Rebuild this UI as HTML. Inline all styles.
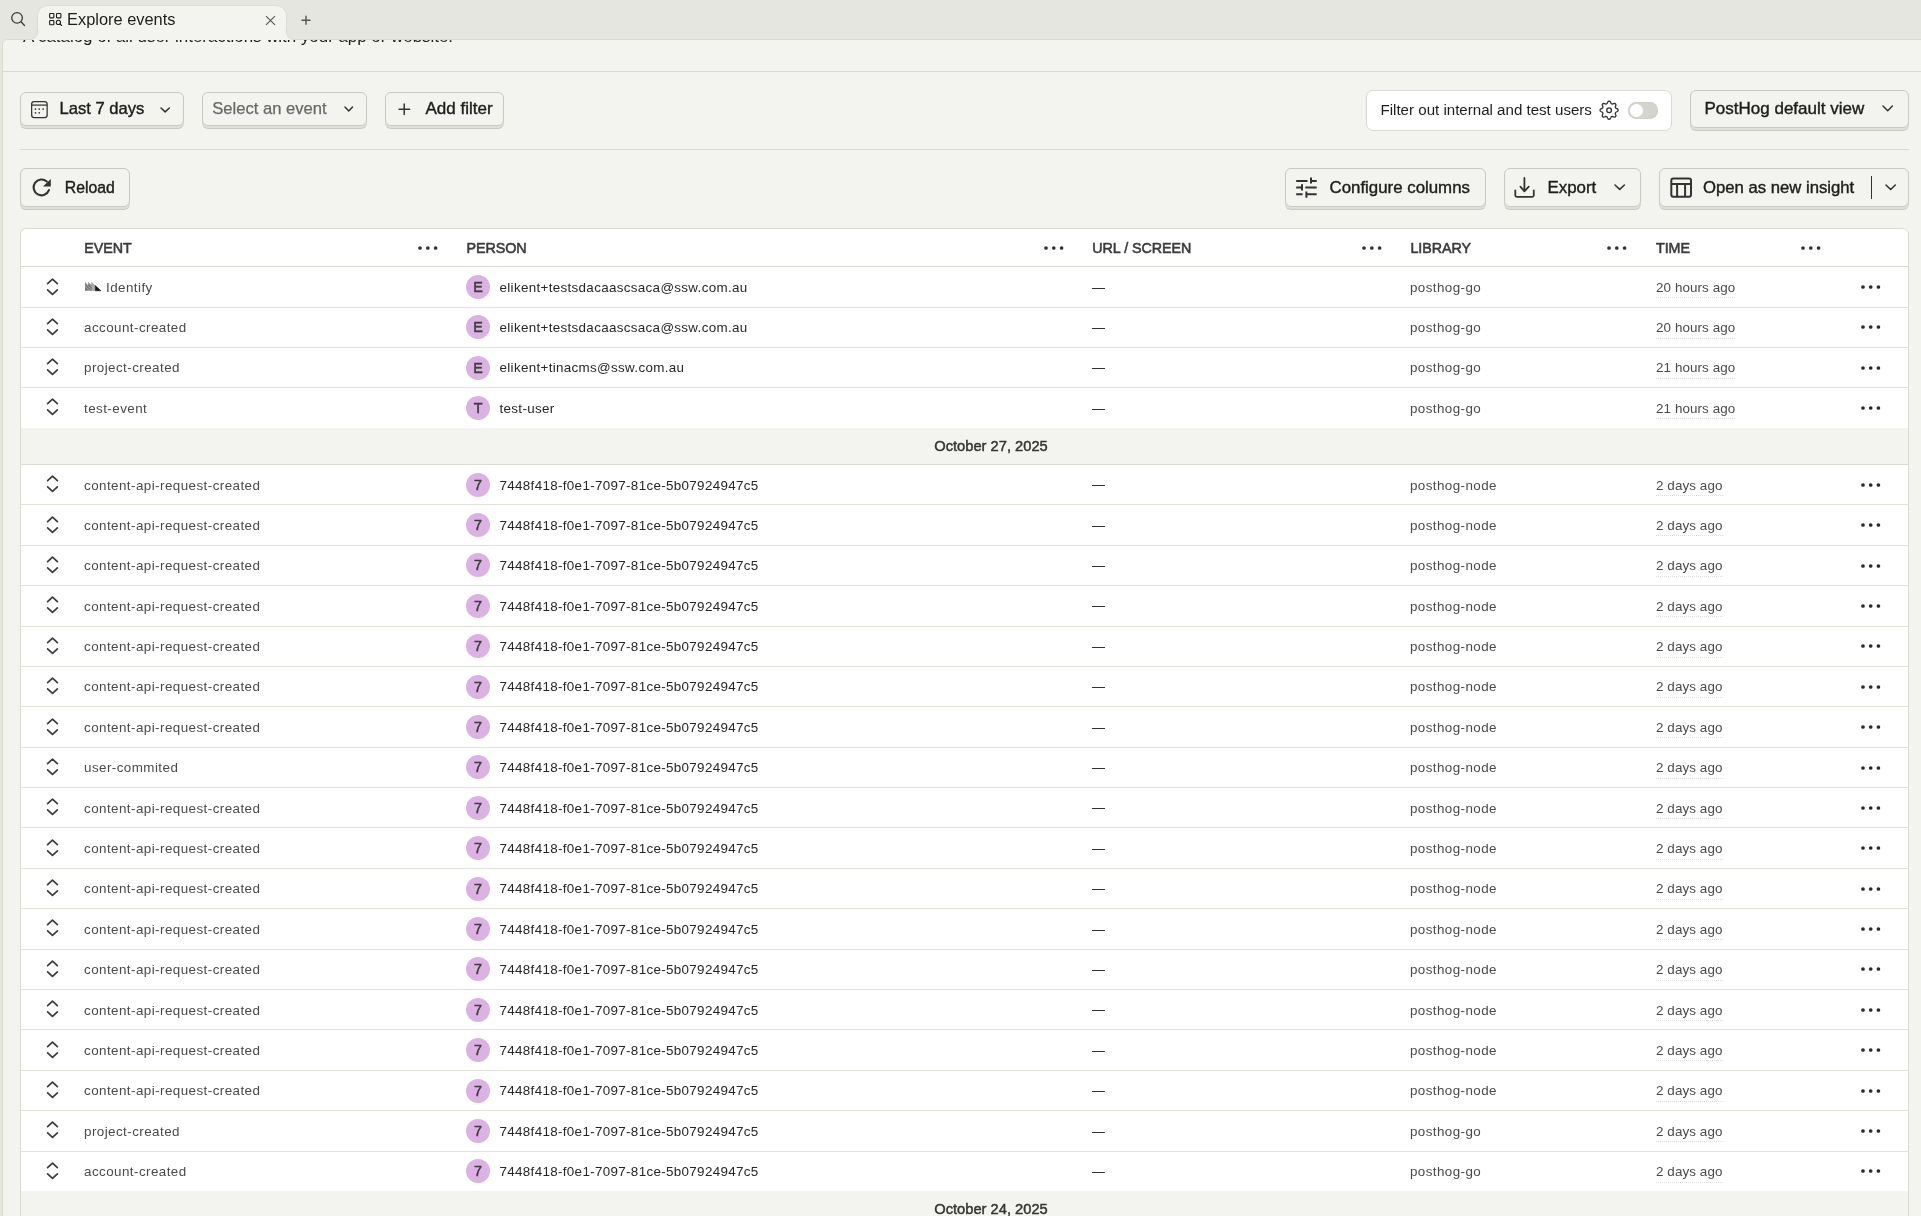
<!DOCTYPE html>
<html><head><meta charset="utf-8"><style>
*{box-sizing:border-box}
html,body{margin:0;padding:0}
body{width:1921px;height:1216px;overflow:hidden;background:#e5e6e0;position:relative;font-family:"Liberation Sans",sans-serif;color:#1d1d1d}
.abs{position:absolute;display:block}
.t{position:absolute;white-space:nowrap;line-height:20px}
.tab{position:absolute;left:38px;top:5.5px;width:248px;height:35.5px;background:#f3f3ef;border-radius:9px 9px 0 0;box-shadow:0 0 0 0.6px #d6d7cf}
.panel{position:absolute;left:2px;top:39px;width:1930px;height:1200px;background:#f3f3ef;border:1px solid #d9dbd2;border-radius:6px 0 0 0}
.btn{position:absolute;border:1px solid #c9c9c3;border-radius:6px;background:#f3f3ef;box-shadow:0 2px 0 0 #dfe1d9,0 3px 0 0 #c9c9c3}
.bt{position:absolute;white-space:nowrap;font-weight:normal;font-size:16.6px;line-height:20px;color:#1d1d1d;-webkit-text-stroke:0.4px #1d1d1d}
.table{position:absolute;left:20px;top:228px;width:1889px;height:1000px;background:#fff;border:1px solid #d9dbd2;border-radius:6px 6px 0 0}
.hd{position:absolute;top:237.5px;font-weight:normal;font-size:14.3px;line-height:20px;color:#3b3b3b;letter-spacing:-0.05px;white-space:nowrap;-webkit-text-stroke:0.55px #3b3b3b}
.hline{position:absolute;left:21px;width:1887px;height:1px;background:#d9dbd2}
.row{position:absolute;left:21px;width:1887px;height:40.39px;border-bottom:1px solid #e1e3db}
.ev{font-size:13.4px;letter-spacing:0.44px;color:#4a4a4a}
.pe{font-size:13.4px;letter-spacing:0.33px;color:#262626}
.lib{font-size:13.4px;letter-spacing:0.42px;color:#4a4a4a}
.tm{font-size:13.4px;letter-spacing:0.1px;color:#4a4a4a} .tm::after{content:'';position:absolute;left:0;right:0;top:19.5px;height:1px;background-image:linear-gradient(90deg,#dedede 50%,transparent 50%);background-size:2px 1px}
.av{position:absolute;width:24px;height:24px;border-radius:50%;background:#dcb1e3;color:#3d3d3d;font-weight:normal;font-size:14.3px;line-height:24px;text-align:center;-webkit-text-stroke:0.5px #3d3d3d}
.dash{position:absolute;width:13px;height:1px;background:#333}
.sep{position:absolute;left:21px;width:1887px;height:37px;background:#f3f3ef;border-bottom:1px solid #d9dbd2}
.sept{position:absolute;left:891px;width:200px;text-align:center;font-weight:normal;font-size:14.7px;line-height:20px;color:#333;-webkit-text-stroke:0.45px #333}
</style></head><body><div id="root" style="position:absolute;left:0;top:0;width:1921px;height:1216px;overflow:hidden;will-change:transform">
<!-- top bar -->
<svg class="abs" style="left:8px;top:9px" width="20" height="20" viewBox="0 0 20 20"><circle cx="9.05" cy="8.87" r="5.3" fill="none" stroke="#3a3a3a" stroke-width="1.3"/><path d="M13.2 13 L16.5 16.5" stroke="#3a3a3a" stroke-width="1.3" stroke-linecap="round"/></svg>
<div class="panel"></div>
<div class="tab"></div>
<svg class="abs" style="left:27px;top:30px" width="12" height="11" viewBox="0 0 12 11"><path d="M0 10 Q11 10 11 0 L12 0 L12 11 L0 11 Z" fill="#f3f3ef"/><path d="M0 10 Q11 10 11 0" fill="none" stroke="#d6d7cf" stroke-width="0.8"/></svg>
<svg class="abs" style="left:285px;top:30px" width="12" height="11" viewBox="0 0 12 11"><path d="M12 10 Q1 10 1 0 L0 0 L0 11 L12 11 Z" fill="#f3f3ef"/><path d="M12 10 Q1 10 1 0" fill="none" stroke="#d6d7cf" stroke-width="0.8"/></svg>
<div class="abs" style="left:3px;top:40px;width:1918px;height:30px;background:#f3f3ef;border-radius:6px 0 0 0"></div>
<div class="abs" style="left:2px;top:44px;width:1px;height:1172px;background:#d9dbd2"></div>
<svg class="abs" style="left:47px;top:11px" width="17" height="17" viewBox="0 0 17 17"><rect x="2.65" y="2.57" width="4.2" height="4.3" rx="0.6" fill="none" stroke="#1d1d1d" stroke-width="1.1"/><rect x="9.5" y="2.57" width="4.4" height="4.3" rx="0.6" fill="none" stroke="#1d1d1d" stroke-width="1.1"/><rect x="2.65" y="9.5" width="4.2" height="4.3" rx="0.6" fill="none" stroke="#1d1d1d" stroke-width="1.1"/><circle cx="11.4" cy="11.4" r="2.1" fill="none" stroke="#1d1d1d" stroke-width="1.1"/><path d="M12.9 12.9 L14.6 14.5" stroke="#1d1d1d" stroke-width="1.1" stroke-linecap="round"/></svg>
<div class="t" style="left:67px;top:9px;font-size:16.4px;line-height:20px;color:#1d1d1d">Explore events</div>
<svg class="abs" style="left:264px;top:14px" width="13" height="13" viewBox="0 0 13 13"><path d="M2.3 2.3 L10.7 10.6 M10.7 2.3 L2.3 10.6" stroke="#555" stroke-width="1.1" stroke-linecap="round"/></svg>
<svg class="abs" style="left:300px;top:14px" width="12" height="12" viewBox="0 0 12 12"><path d="M6 2.3 L6 10.2 M2 6.2 L10 6.2" stroke="#555" stroke-width="1.4" stroke-linecap="round"/></svg>
<div class="t" style="left:23px;top:27px;font-size:16.9px;line-height:20px;color:#1d1d1d;clip-path:inset(13px 0 0 0)">A catalog of all user interactions with your app or website.</div>
<div class="abs" style="left:3px;top:71px;width:1918px;height:1px;background:#d9dbd2"></div>

<!-- filter row -->
<div class="btn" style="left:20px;top:92px;width:164px;height:34px"></div>
<svg class="abs" style="left:30px;top:100px" width="19" height="19" viewBox="0 0 19 19"><rect x="1.65" y="1.5" width="15.5" height="16" rx="2.6" fill="none" stroke="#333" stroke-width="1.25"/><path d="M1.65 5.1 L17.15 5.1" stroke="#333" stroke-width="1.25"/><circle cx="5.5" cy="9.1" r="0.85" fill="#333"/><circle cx="9.2" cy="9.1" r="0.85" fill="#333"/><circle cx="13.1" cy="9.1" r="0.85" fill="#333"/><circle cx="5.5" cy="12.8" r="0.85" fill="#333"/><circle cx="9.2" cy="12.8" r="0.85" fill="#333"/></svg>
<div class="bt" style="left:59.5px;top:99px">Last 7 days</div>
<svg class="abs" style="left:158.2px;top:104.5px" width="14.3" height="9.9" viewBox="158.2 104.5 14.3 9.9"><path d="M161.2 107.5 L165.35 111.4 L169.5 107.5" fill="none" stroke="#333" stroke-width="1.5" stroke-linecap="round" stroke-linejoin="round"/></svg>
<div class="btn" style="left:202px;top:92px;width:165px;height:34px"></div>
<div class="t" style="left:212.2px;top:99px;font-size:16.6px;color:#686868;-webkit-text-stroke:0.25px #686868">Select an event</div>
<svg class="abs" style="left:341.5px;top:104.0px" width="13.5" height="10.0" viewBox="341.5 104.0 13.5 10.0"><path d="M344.5 107.0 L348.25 111.0 L352.0 107.0" fill="none" stroke="#333" stroke-width="1.5" stroke-linecap="round" stroke-linejoin="round"/></svg>
<div class="btn" style="left:385px;top:92px;width:119px;height:34px"></div>
<svg class="abs" style="left:396px;top:101px" width="16" height="16" viewBox="0 0 16 16"><path d="M8.2 3.1 L8.2 13.6 M3.1 8.25 L13.6 8.25" stroke="#333" stroke-width="1.5" stroke-linecap="round"/></svg>
<div class="bt" style="left:425.5px;top:99px;font-size:17px">Add filter</div>

<div class="abs" style="left:1366px;top:90px;width:306px;height:41px;background:#fff;border:1px solid #d9dbd2;border-radius:7px"></div>
<div class="t" style="left:1380.5px;top:100px;font-size:15.1px;color:#1d1d1d">Filter out internal and test users</div>
<svg class="abs" style="left:1599px;top:100px" width="21" height="21" viewBox="0 0 21 21"><path d="M10.10 1.15 L10.97 1.34 L11.65 2.40 L12.13 3.51 L12.72 3.87 L13.40 4.03 L14.52 3.59 L15.75 3.31 L16.50 3.80 L16.99 4.55 L16.71 5.78 L16.27 6.90 L16.43 7.58 L16.79 8.17 L17.90 8.65 L18.96 9.33 L19.15 10.20 L18.96 11.07 L17.90 11.75 L16.79 12.23 L16.43 12.82 L16.27 13.50 L16.71 14.62 L16.99 15.85 L16.50 16.60 L15.75 17.09 L14.52 16.81 L13.40 16.37 L12.72 16.53 L12.13 16.89 L11.65 18.00 L10.97 19.06 L10.10 19.25 L9.23 19.06 L8.55 18.00 L8.07 16.89 L7.48 16.53 L6.80 16.37 L5.68 16.81 L4.45 17.09 L3.70 16.60 L3.21 15.85 L3.49 14.62 L3.93 13.50 L3.77 12.82 L3.41 12.23 L2.30 11.75 L1.24 11.07 L1.05 10.20 L1.24 9.33 L2.30 8.65 L3.41 8.17 L3.77 7.58 L3.93 6.90 L3.49 5.78 L3.21 4.55 L3.70 3.80 L4.45 3.31 L5.68 3.59 L6.80 4.03 L7.48 3.87 L8.07 3.51 L8.55 2.40 L9.23 1.34 L10.10 1.15Z" fill="none" stroke="#333" stroke-width="1.3" stroke-linejoin="round"/><circle cx="10.1" cy="10.2" r="2.35" fill="none" stroke="#333" stroke-width="1.35"/></svg>
<div class="abs" style="left:1628px;top:102px;width:30px;height:17px;border-radius:9px;background:#d3d4ce;box-shadow:inset 0 0 0 1px #cfd0c9"></div>
<div class="abs" style="left:1629.5px;top:103.8px;width:13.5px;height:13.5px;border-radius:50%;background:#fff;box-shadow:0 0 0 0.5px #d6d6d0"></div>

<div class="btn" style="left:1690px;top:90px;width:219px;height:38px"></div>
<div class="bt" style="left:1704.5px;top:99px;font-size:17px">PostHog default view</div>
<svg class="abs" style="left:1879.8px;top:102.8px" width="15.4" height="10.7" viewBox="1879.8 102.8 15.4 10.7"><path d="M1882.8 105.8 L1887.50 110.5 L1892.2 105.8" fill="none" stroke="#333" stroke-width="1.5" stroke-linecap="round" stroke-linejoin="round"/></svg>

<div class="abs" style="left:20px;top:149px;width:1889px;height:1px;background:#d9dbd2"></div>

<!-- action row -->
<div class="btn" style="left:20px;top:168px;width:110px;height:39px"></div>
<svg class="abs" style="left:31px;top:177px" width="21" height="21" viewBox="0 0 21 21"><path d="M15.79 4.53 A7.9 7.9 0 1 0 17.92 13.1" fill="none" stroke="#333" stroke-width="2.1" stroke-linecap="round"/><path d="M19.8 1.9 L19.8 9.5 L12 9.5 Z" fill="#333"/></svg>
<div class="bt" style="left:64.8px;top:178px;font-size:15.8px">Reload</div>

<div class="btn" style="left:1285px;top:168px;width:201px;height:39px"></div>
<svg class="abs" style="left:1292px;top:173px" width="30" height="30" viewBox="0 0 30 30"><path d="M4.2 7.9 L15.5 7.9 M19.5 7.9 L24.7 7.9 M19 4.4 L19 10.6 M4.2 14.6 L10 14.6 M10 11.3 L10 17.5 M13.3 14.6 L24.7 14.6 M4.2 21.3 L10.6 21.3 M14.4 18.4 L14.4 24.7 M14.4 21.3 L24.7 21.3" stroke="#333" stroke-width="2" stroke-linecap="butt"/></svg>
<div class="bt" style="left:1329.5px;top:178px;font-size:16.85px">Configure columns</div>

<div class="btn" style="left:1504px;top:168px;width:137px;height:39px"></div>
<svg class="abs" style="left:1510px;top:173px" width="30" height="30" viewBox="0 0 30 30"><path d="M14.4 4.9 L14.4 18.3 M10.4 13.6 L14.4 18.3 L18.75 13.6 M5.3 17.3 L5.3 22.3 Q5.3 23.8 6.8 23.8 L22.3 23.8 Q23.8 23.8 23.8 22.3 L23.8 17.3" fill="none" stroke="#333" stroke-width="1.8" stroke-linecap="round" stroke-linejoin="round"/></svg>
<div class="bt" style="left:1547.5px;top:178px;font-size:16.9px">Export</div>
<svg class="abs" style="left:1611.9px;top:182.1px" width="15.4" height="10.3" viewBox="1611.9 182.1 15.4 10.3"><path d="M1614.9 185.1 L1619.60 189.4 L1624.3 185.1" fill="none" stroke="#333" stroke-width="1.6" stroke-linecap="round" stroke-linejoin="round"/></svg>

<div class="btn" style="left:1659px;top:168px;width:250px;height:39px"></div>
<svg class="abs" style="left:1666px;top:173px" width="30" height="30" viewBox="0 0 30 30"><rect x="5.3" y="5.5" width="19.7" height="18.3" rx="2" fill="none" stroke="#333" stroke-width="2"/><path d="M5.3 10.9 L25 10.9 M11.1 10.9 L11.1 23.8 M19.1 10.9 L19.1 23.8" stroke="#333" stroke-width="2"/></svg>
<div class="bt" style="left:1703px;top:178px;font-size:16.7px">Open as new insight</div>
<div class="abs" style="left:1870.8px;top:176px;width:1.3px;height:22.5px;background:#333"></div>
<svg class="abs" style="left:1882.6px;top:181.9px" width="15.3" height="10.5" viewBox="1882.6 181.9 15.3 10.5"><path d="M1885.6 184.9 L1890.25 189.4 L1894.9 184.9" fill="none" stroke="#333" stroke-width="1.6" stroke-linecap="round" stroke-linejoin="round"/></svg>

<!-- table -->
<div class="table"></div>
<div class="hd" style="left:84.3px">EVENT</div>
<div class="hd" style="left:466.5px">PERSON</div>
<div class="hd" style="left:1092.3px">URL / SCREEN</div>
<div class="hd" style="left:1410.4px">LIBRARY</div>
<div class="hd" style="left:1656px">TIME</div>
<svg class="abs" style="left:416.10px;top:244.30px" width="24" height="8" viewBox="0 0 24 8"><circle cx="4" cy="4" r="1.85" fill="#333"/><circle cx="11.8" cy="4" r="1.85" fill="#333"/><circle cx="19.6" cy="4" r="1.85" fill="#333"/></svg>
<svg class="abs" style="left:1042.10px;top:244.30px" width="24" height="8" viewBox="0 0 24 8"><circle cx="4" cy="4" r="1.85" fill="#333"/><circle cx="11.8" cy="4" r="1.85" fill="#333"/><circle cx="19.6" cy="4" r="1.85" fill="#333"/></svg>
<svg class="abs" style="left:1360.00px;top:244.30px" width="24" height="8" viewBox="0 0 24 8"><circle cx="4" cy="4" r="1.85" fill="#333"/><circle cx="11.8" cy="4" r="1.85" fill="#333"/><circle cx="19.6" cy="4" r="1.85" fill="#333"/></svg>
<svg class="abs" style="left:1605.30px;top:244.30px" width="24" height="8" viewBox="0 0 24 8"><circle cx="4" cy="4" r="1.85" fill="#333"/><circle cx="11.8" cy="4" r="1.85" fill="#333"/><circle cx="19.6" cy="4" r="1.85" fill="#333"/></svg>
<svg class="abs" style="left:1798.80px;top:244.30px" width="24" height="8" viewBox="0 0 24 8"><circle cx="4" cy="4" r="1.85" fill="#333"/><circle cx="11.8" cy="4" r="1.85" fill="#333"/><circle cx="19.6" cy="4" r="1.85" fill="#333"/></svg>
<div class="hline" style="top:266px"></div>
<div class="row" style="top:267.00px;height:41.00px"></div>
<svg class="abs" style="left:42px;top:274.50px" width="21" height="24" viewBox="0 0 21 24"><path d="M5.6 8.7 L10.5 4.1 L15.4 8.7 M5.6 14.8 L10.5 19.4 L15.4 14.8" fill="none" stroke="#3b3b3b" stroke-width="1.7" stroke-linecap="round" stroke-linejoin="round"/></svg>
<svg class="abs" style="left:84px;top:280.60px" width="18" height="11" viewBox="0 0 18 11"><path d="M1 9.8 L1 1 L4 4 L4.3 1 L7.3 4 L7.6 1 L11.4 4.8 L11.4 9.8 Z" fill="#7a7a7a"/><path d="M1.2 5.2 L5.6 9.8 M1.2 2 L8.9 9.8 M4.4 2 L11.2 8.9" stroke="#fff" stroke-opacity="0.45" stroke-width="0.7"/><path d="M7.6 1 L11.4 4.8 L11.4 9.8 L8 9.8 Z" fill="#fff" fill-opacity="0.35"/><path d="M11.3 4.6 L11.3 9.8 L17 9.8 Z" fill="#111" stroke="#111" stroke-width="0.5" stroke-linejoin="round"/></svg>
<div class="t ev" style="left:106px;top:277.80px">Identify</div>
<div class="av" style="left:466px;top:275.00px">E</div>
<div class="t pe" style="left:499.5px;top:277.80px">elikent+testsdacaascsaca@ssw.com.au</div>
<div class="dash" style="left:1092px;top:288px"></div>
<div class="t lib" style="left:1410px;top:277.80px">posthog-go</div>
<div class="t tm" style="left:1656px;top:277.80px">20 hours ago</div>
<svg class="abs" style="left:1858.50px;top:283.10px" width="23" height="8" viewBox="0 0 23 8"><circle cx="4" cy="4" r="1.85" fill="#2a2a2a"/><circle cx="11.7" cy="4" r="1.85" fill="#2a2a2a"/><circle cx="19.4" cy="4" r="1.85" fill="#2a2a2a"/></svg>
<div class="row" style="top:308.00px;height:40.00px"></div>
<svg class="abs" style="left:42px;top:314.83px" width="21" height="24" viewBox="0 0 21 24"><path d="M5.6 8.7 L10.5 4.1 L15.4 8.7 M5.6 14.8 L10.5 19.4 L15.4 14.8" fill="none" stroke="#3b3b3b" stroke-width="1.7" stroke-linecap="round" stroke-linejoin="round"/></svg>
<div class="t ev" style="left:84px;top:318.13px">account-created</div>
<div class="av" style="left:466px;top:315.33px">E</div>
<div class="t pe" style="left:499.5px;top:318.13px">elikent+testsdacaascsaca@ssw.com.au</div>
<div class="dash" style="left:1092px;top:328px"></div>
<div class="t lib" style="left:1410px;top:318.13px">posthog-go</div>
<div class="t tm" style="left:1656px;top:318.13px">20 hours ago</div>
<svg class="abs" style="left:1858.50px;top:323.43px" width="23" height="8" viewBox="0 0 23 8"><circle cx="4" cy="4" r="1.85" fill="#2a2a2a"/><circle cx="11.7" cy="4" r="1.85" fill="#2a2a2a"/><circle cx="19.4" cy="4" r="1.85" fill="#2a2a2a"/></svg>
<div class="row" style="top:348.00px;height:40.00px"></div>
<svg class="abs" style="left:42px;top:355.16px" width="21" height="24" viewBox="0 0 21 24"><path d="M5.6 8.7 L10.5 4.1 L15.4 8.7 M5.6 14.8 L10.5 19.4 L15.4 14.8" fill="none" stroke="#3b3b3b" stroke-width="1.7" stroke-linecap="round" stroke-linejoin="round"/></svg>
<div class="t ev" style="left:84px;top:358.46px">project-created</div>
<div class="av" style="left:466px;top:355.66px">E</div>
<div class="t pe" style="left:499.5px;top:358.46px">elikent+tinacms@ssw.com.au</div>
<div class="dash" style="left:1092px;top:368px"></div>
<div class="t lib" style="left:1410px;top:358.46px">posthog-go</div>
<div class="t tm" style="left:1656px;top:358.46px">21 hours ago</div>
<svg class="abs" style="left:1858.50px;top:363.76px" width="23" height="8" viewBox="0 0 23 8"><circle cx="4" cy="4" r="1.85" fill="#2a2a2a"/><circle cx="11.7" cy="4" r="1.85" fill="#2a2a2a"/><circle cx="19.4" cy="4" r="1.85" fill="#2a2a2a"/></svg>
<div class="row" style="top:388.00px;height:40.00px;border-bottom:0"></div>
<svg class="abs" style="left:42px;top:395.49px" width="21" height="24" viewBox="0 0 21 24"><path d="M5.6 8.7 L10.5 4.1 L15.4 8.7 M5.6 14.8 L10.5 19.4 L15.4 14.8" fill="none" stroke="#3b3b3b" stroke-width="1.7" stroke-linecap="round" stroke-linejoin="round"/></svg>
<div class="t ev" style="left:84px;top:398.79px">test-event</div>
<div class="av" style="left:466px;top:395.99px">T</div>
<div class="t pe" style="left:499.5px;top:398.79px">test-user</div>
<div class="dash" style="left:1092px;top:409px"></div>
<div class="t lib" style="left:1410px;top:398.79px">posthog-go</div>
<div class="t tm" style="left:1656px;top:398.79px">21 hours ago</div>
<svg class="abs" style="left:1858.50px;top:404.09px" width="23" height="8" viewBox="0 0 23 8"><circle cx="4" cy="4" r="1.85" fill="#2a2a2a"/><circle cx="11.7" cy="4" r="1.85" fill="#2a2a2a"/><circle cx="19.4" cy="4" r="1.85" fill="#2a2a2a"/></svg>
<div class="sep" style="top:428px"></div><div class="sept" style="top:435.5px">October 27, 2025</div>
<div class="row" style="top:465.00px;height:40.39px"></div>
<svg class="abs" style="left:42px;top:472.19px" width="21" height="24" viewBox="0 0 21 24"><path d="M5.6 8.7 L10.5 4.1 L15.4 8.7 M5.6 14.8 L10.5 19.4 L15.4 14.8" fill="none" stroke="#3b3b3b" stroke-width="1.7" stroke-linecap="round" stroke-linejoin="round"/></svg>
<div class="t ev" style="left:84px;top:475.50px">content-api-request-created</div>
<div class="av" style="left:466px;top:472.69px">7</div>
<div class="t pe" style="left:499.5px;top:475.50px">7448f418-f0e1-7097-81ce-5b07924947c5</div>
<div class="dash" style="left:1092px;top:485px"></div>
<div class="t lib" style="left:1410px;top:475.50px">posthog-node</div>
<div class="t tm" style="left:1656px;top:475.50px">2 days ago</div>
<svg class="abs" style="left:1858.50px;top:480.80px" width="23" height="8" viewBox="0 0 23 8"><circle cx="4" cy="4" r="1.85" fill="#2a2a2a"/><circle cx="11.7" cy="4" r="1.85" fill="#2a2a2a"/><circle cx="19.4" cy="4" r="1.85" fill="#2a2a2a"/></svg>
<div class="row" style="top:505.39px;height:40.39px"></div>
<svg class="abs" style="left:42px;top:512.59px" width="21" height="24" viewBox="0 0 21 24"><path d="M5.6 8.7 L10.5 4.1 L15.4 8.7 M5.6 14.8 L10.5 19.4 L15.4 14.8" fill="none" stroke="#3b3b3b" stroke-width="1.7" stroke-linecap="round" stroke-linejoin="round"/></svg>
<div class="t ev" style="left:84px;top:515.89px">content-api-request-created</div>
<div class="av" style="left:466px;top:513.09px">7</div>
<div class="t pe" style="left:499.5px;top:515.89px">7448f418-f0e1-7097-81ce-5b07924947c5</div>
<div class="dash" style="left:1092px;top:526px"></div>
<div class="t lib" style="left:1410px;top:515.89px">posthog-node</div>
<div class="t tm" style="left:1656px;top:515.89px">2 days ago</div>
<svg class="abs" style="left:1858.50px;top:521.19px" width="23" height="8" viewBox="0 0 23 8"><circle cx="4" cy="4" r="1.85" fill="#2a2a2a"/><circle cx="11.7" cy="4" r="1.85" fill="#2a2a2a"/><circle cx="19.4" cy="4" r="1.85" fill="#2a2a2a"/></svg>
<div class="row" style="top:545.78px;height:40.39px"></div>
<svg class="abs" style="left:42px;top:552.98px" width="21" height="24" viewBox="0 0 21 24"><path d="M5.6 8.7 L10.5 4.1 L15.4 8.7 M5.6 14.8 L10.5 19.4 L15.4 14.8" fill="none" stroke="#3b3b3b" stroke-width="1.7" stroke-linecap="round" stroke-linejoin="round"/></svg>
<div class="t ev" style="left:84px;top:556.28px">content-api-request-created</div>
<div class="av" style="left:466px;top:553.48px">7</div>
<div class="t pe" style="left:499.5px;top:556.28px">7448f418-f0e1-7097-81ce-5b07924947c5</div>
<div class="dash" style="left:1092px;top:566px"></div>
<div class="t lib" style="left:1410px;top:556.28px">posthog-node</div>
<div class="t tm" style="left:1656px;top:556.28px">2 days ago</div>
<svg class="abs" style="left:1858.50px;top:561.58px" width="23" height="8" viewBox="0 0 23 8"><circle cx="4" cy="4" r="1.85" fill="#2a2a2a"/><circle cx="11.7" cy="4" r="1.85" fill="#2a2a2a"/><circle cx="19.4" cy="4" r="1.85" fill="#2a2a2a"/></svg>
<div class="row" style="top:586.17px;height:40.39px"></div>
<svg class="abs" style="left:42px;top:593.37px" width="21" height="24" viewBox="0 0 21 24"><path d="M5.6 8.7 L10.5 4.1 L15.4 8.7 M5.6 14.8 L10.5 19.4 L15.4 14.8" fill="none" stroke="#3b3b3b" stroke-width="1.7" stroke-linecap="round" stroke-linejoin="round"/></svg>
<div class="t ev" style="left:84px;top:596.67px">content-api-request-created</div>
<div class="av" style="left:466px;top:593.87px">7</div>
<div class="t pe" style="left:499.5px;top:596.67px">7448f418-f0e1-7097-81ce-5b07924947c5</div>
<div class="dash" style="left:1092px;top:606px"></div>
<div class="t lib" style="left:1410px;top:596.67px">posthog-node</div>
<div class="t tm" style="left:1656px;top:596.67px">2 days ago</div>
<svg class="abs" style="left:1858.50px;top:601.97px" width="23" height="8" viewBox="0 0 23 8"><circle cx="4" cy="4" r="1.85" fill="#2a2a2a"/><circle cx="11.7" cy="4" r="1.85" fill="#2a2a2a"/><circle cx="19.4" cy="4" r="1.85" fill="#2a2a2a"/></svg>
<div class="row" style="top:626.56px;height:40.39px"></div>
<svg class="abs" style="left:42px;top:633.75px" width="21" height="24" viewBox="0 0 21 24"><path d="M5.6 8.7 L10.5 4.1 L15.4 8.7 M5.6 14.8 L10.5 19.4 L15.4 14.8" fill="none" stroke="#3b3b3b" stroke-width="1.7" stroke-linecap="round" stroke-linejoin="round"/></svg>
<div class="t ev" style="left:84px;top:637.06px">content-api-request-created</div>
<div class="av" style="left:466px;top:634.25px">7</div>
<div class="t pe" style="left:499.5px;top:637.06px">7448f418-f0e1-7097-81ce-5b07924947c5</div>
<div class="dash" style="left:1092px;top:647px"></div>
<div class="t lib" style="left:1410px;top:637.06px">posthog-node</div>
<div class="t tm" style="left:1656px;top:637.06px">2 days ago</div>
<svg class="abs" style="left:1858.50px;top:642.36px" width="23" height="8" viewBox="0 0 23 8"><circle cx="4" cy="4" r="1.85" fill="#2a2a2a"/><circle cx="11.7" cy="4" r="1.85" fill="#2a2a2a"/><circle cx="19.4" cy="4" r="1.85" fill="#2a2a2a"/></svg>
<div class="row" style="top:666.95px;height:40.39px"></div>
<svg class="abs" style="left:42px;top:674.14px" width="21" height="24" viewBox="0 0 21 24"><path d="M5.6 8.7 L10.5 4.1 L15.4 8.7 M5.6 14.8 L10.5 19.4 L15.4 14.8" fill="none" stroke="#3b3b3b" stroke-width="1.7" stroke-linecap="round" stroke-linejoin="round"/></svg>
<div class="t ev" style="left:84px;top:677.45px">content-api-request-created</div>
<div class="av" style="left:466px;top:674.64px">7</div>
<div class="t pe" style="left:499.5px;top:677.45px">7448f418-f0e1-7097-81ce-5b07924947c5</div>
<div class="dash" style="left:1092px;top:687px"></div>
<div class="t lib" style="left:1410px;top:677.45px">posthog-node</div>
<div class="t tm" style="left:1656px;top:677.45px">2 days ago</div>
<svg class="abs" style="left:1858.50px;top:682.75px" width="23" height="8" viewBox="0 0 23 8"><circle cx="4" cy="4" r="1.85" fill="#2a2a2a"/><circle cx="11.7" cy="4" r="1.85" fill="#2a2a2a"/><circle cx="19.4" cy="4" r="1.85" fill="#2a2a2a"/></svg>
<div class="row" style="top:707.34px;height:40.39px"></div>
<svg class="abs" style="left:42px;top:714.53px" width="21" height="24" viewBox="0 0 21 24"><path d="M5.6 8.7 L10.5 4.1 L15.4 8.7 M5.6 14.8 L10.5 19.4 L15.4 14.8" fill="none" stroke="#3b3b3b" stroke-width="1.7" stroke-linecap="round" stroke-linejoin="round"/></svg>
<div class="t ev" style="left:84px;top:717.84px">content-api-request-created</div>
<div class="av" style="left:466px;top:715.03px">7</div>
<div class="t pe" style="left:499.5px;top:717.84px">7448f418-f0e1-7097-81ce-5b07924947c5</div>
<div class="dash" style="left:1092px;top:728px"></div>
<div class="t lib" style="left:1410px;top:717.84px">posthog-node</div>
<div class="t tm" style="left:1656px;top:717.84px">2 days ago</div>
<svg class="abs" style="left:1858.50px;top:723.13px" width="23" height="8" viewBox="0 0 23 8"><circle cx="4" cy="4" r="1.85" fill="#2a2a2a"/><circle cx="11.7" cy="4" r="1.85" fill="#2a2a2a"/><circle cx="19.4" cy="4" r="1.85" fill="#2a2a2a"/></svg>
<div class="row" style="top:747.73px;height:40.39px"></div>
<svg class="abs" style="left:42px;top:754.92px" width="21" height="24" viewBox="0 0 21 24"><path d="M5.6 8.7 L10.5 4.1 L15.4 8.7 M5.6 14.8 L10.5 19.4 L15.4 14.8" fill="none" stroke="#3b3b3b" stroke-width="1.7" stroke-linecap="round" stroke-linejoin="round"/></svg>
<div class="t ev" style="left:84px;top:758.23px">user-commited</div>
<div class="av" style="left:466px;top:755.42px">7</div>
<div class="t pe" style="left:499.5px;top:758.23px">7448f418-f0e1-7097-81ce-5b07924947c5</div>
<div class="dash" style="left:1092px;top:768px"></div>
<div class="t lib" style="left:1410px;top:758.23px">posthog-node</div>
<div class="t tm" style="left:1656px;top:758.23px">2 days ago</div>
<svg class="abs" style="left:1858.50px;top:763.52px" width="23" height="8" viewBox="0 0 23 8"><circle cx="4" cy="4" r="1.85" fill="#2a2a2a"/><circle cx="11.7" cy="4" r="1.85" fill="#2a2a2a"/><circle cx="19.4" cy="4" r="1.85" fill="#2a2a2a"/></svg>
<div class="row" style="top:788.12px;height:40.39px"></div>
<svg class="abs" style="left:42px;top:795.31px" width="21" height="24" viewBox="0 0 21 24"><path d="M5.6 8.7 L10.5 4.1 L15.4 8.7 M5.6 14.8 L10.5 19.4 L15.4 14.8" fill="none" stroke="#3b3b3b" stroke-width="1.7" stroke-linecap="round" stroke-linejoin="round"/></svg>
<div class="t ev" style="left:84px;top:798.62px">content-api-request-created</div>
<div class="av" style="left:466px;top:795.81px">7</div>
<div class="t pe" style="left:499.5px;top:798.62px">7448f418-f0e1-7097-81ce-5b07924947c5</div>
<div class="dash" style="left:1092px;top:808px"></div>
<div class="t lib" style="left:1410px;top:798.62px">posthog-node</div>
<div class="t tm" style="left:1656px;top:798.62px">2 days ago</div>
<svg class="abs" style="left:1858.50px;top:803.91px" width="23" height="8" viewBox="0 0 23 8"><circle cx="4" cy="4" r="1.85" fill="#2a2a2a"/><circle cx="11.7" cy="4" r="1.85" fill="#2a2a2a"/><circle cx="19.4" cy="4" r="1.85" fill="#2a2a2a"/></svg>
<div class="row" style="top:828.51px;height:40.39px"></div>
<svg class="abs" style="left:42px;top:835.70px" width="21" height="24" viewBox="0 0 21 24"><path d="M5.6 8.7 L10.5 4.1 L15.4 8.7 M5.6 14.8 L10.5 19.4 L15.4 14.8" fill="none" stroke="#3b3b3b" stroke-width="1.7" stroke-linecap="round" stroke-linejoin="round"/></svg>
<div class="t ev" style="left:84px;top:839.00px">content-api-request-created</div>
<div class="av" style="left:466px;top:836.20px">7</div>
<div class="t pe" style="left:499.5px;top:839.00px">7448f418-f0e1-7097-81ce-5b07924947c5</div>
<div class="dash" style="left:1092px;top:849px"></div>
<div class="t lib" style="left:1410px;top:839.00px">posthog-node</div>
<div class="t tm" style="left:1656px;top:839.00px">2 days ago</div>
<svg class="abs" style="left:1858.50px;top:844.30px" width="23" height="8" viewBox="0 0 23 8"><circle cx="4" cy="4" r="1.85" fill="#2a2a2a"/><circle cx="11.7" cy="4" r="1.85" fill="#2a2a2a"/><circle cx="19.4" cy="4" r="1.85" fill="#2a2a2a"/></svg>
<div class="row" style="top:868.90px;height:40.39px"></div>
<svg class="abs" style="left:42px;top:876.09px" width="21" height="24" viewBox="0 0 21 24"><path d="M5.6 8.7 L10.5 4.1 L15.4 8.7 M5.6 14.8 L10.5 19.4 L15.4 14.8" fill="none" stroke="#3b3b3b" stroke-width="1.7" stroke-linecap="round" stroke-linejoin="round"/></svg>
<div class="t ev" style="left:84px;top:879.39px">content-api-request-created</div>
<div class="av" style="left:466px;top:876.59px">7</div>
<div class="t pe" style="left:499.5px;top:879.39px">7448f418-f0e1-7097-81ce-5b07924947c5</div>
<div class="dash" style="left:1092px;top:889px"></div>
<div class="t lib" style="left:1410px;top:879.39px">posthog-node</div>
<div class="t tm" style="left:1656px;top:879.39px">2 days ago</div>
<svg class="abs" style="left:1858.50px;top:884.69px" width="23" height="8" viewBox="0 0 23 8"><circle cx="4" cy="4" r="1.85" fill="#2a2a2a"/><circle cx="11.7" cy="4" r="1.85" fill="#2a2a2a"/><circle cx="19.4" cy="4" r="1.85" fill="#2a2a2a"/></svg>
<div class="row" style="top:909.29px;height:40.39px"></div>
<svg class="abs" style="left:42px;top:916.48px" width="21" height="24" viewBox="0 0 21 24"><path d="M5.6 8.7 L10.5 4.1 L15.4 8.7 M5.6 14.8 L10.5 19.4 L15.4 14.8" fill="none" stroke="#3b3b3b" stroke-width="1.7" stroke-linecap="round" stroke-linejoin="round"/></svg>
<div class="t ev" style="left:84px;top:919.78px">content-api-request-created</div>
<div class="av" style="left:466px;top:916.98px">7</div>
<div class="t pe" style="left:499.5px;top:919.78px">7448f418-f0e1-7097-81ce-5b07924947c5</div>
<div class="dash" style="left:1092px;top:930px"></div>
<div class="t lib" style="left:1410px;top:919.78px">posthog-node</div>
<div class="t tm" style="left:1656px;top:919.78px">2 days ago</div>
<svg class="abs" style="left:1858.50px;top:925.08px" width="23" height="8" viewBox="0 0 23 8"><circle cx="4" cy="4" r="1.85" fill="#2a2a2a"/><circle cx="11.7" cy="4" r="1.85" fill="#2a2a2a"/><circle cx="19.4" cy="4" r="1.85" fill="#2a2a2a"/></svg>
<div class="row" style="top:949.68px;height:40.39px"></div>
<svg class="abs" style="left:42px;top:956.87px" width="21" height="24" viewBox="0 0 21 24"><path d="M5.6 8.7 L10.5 4.1 L15.4 8.7 M5.6 14.8 L10.5 19.4 L15.4 14.8" fill="none" stroke="#3b3b3b" stroke-width="1.7" stroke-linecap="round" stroke-linejoin="round"/></svg>
<div class="t ev" style="left:84px;top:960.17px">content-api-request-created</div>
<div class="av" style="left:466px;top:957.37px">7</div>
<div class="t pe" style="left:499.5px;top:960.17px">7448f418-f0e1-7097-81ce-5b07924947c5</div>
<div class="dash" style="left:1092px;top:970px"></div>
<div class="t lib" style="left:1410px;top:960.17px">posthog-node</div>
<div class="t tm" style="left:1656px;top:960.17px">2 days ago</div>
<svg class="abs" style="left:1858.50px;top:965.47px" width="23" height="8" viewBox="0 0 23 8"><circle cx="4" cy="4" r="1.85" fill="#2a2a2a"/><circle cx="11.7" cy="4" r="1.85" fill="#2a2a2a"/><circle cx="19.4" cy="4" r="1.85" fill="#2a2a2a"/></svg>
<div class="row" style="top:990.07px;height:40.39px"></div>
<svg class="abs" style="left:42px;top:997.26px" width="21" height="24" viewBox="0 0 21 24"><path d="M5.6 8.7 L10.5 4.1 L15.4 8.7 M5.6 14.8 L10.5 19.4 L15.4 14.8" fill="none" stroke="#3b3b3b" stroke-width="1.7" stroke-linecap="round" stroke-linejoin="round"/></svg>
<div class="t ev" style="left:84px;top:1000.56px">content-api-request-created</div>
<div class="av" style="left:466px;top:997.76px">7</div>
<div class="t pe" style="left:499.5px;top:1000.56px">7448f418-f0e1-7097-81ce-5b07924947c5</div>
<div class="dash" style="left:1092px;top:1010px"></div>
<div class="t lib" style="left:1410px;top:1000.56px">posthog-node</div>
<div class="t tm" style="left:1656px;top:1000.56px">2 days ago</div>
<svg class="abs" style="left:1858.50px;top:1005.86px" width="23" height="8" viewBox="0 0 23 8"><circle cx="4" cy="4" r="1.85" fill="#2a2a2a"/><circle cx="11.7" cy="4" r="1.85" fill="#2a2a2a"/><circle cx="19.4" cy="4" r="1.85" fill="#2a2a2a"/></svg>
<div class="row" style="top:1030.46px;height:40.39px"></div>
<svg class="abs" style="left:42px;top:1037.65px" width="21" height="24" viewBox="0 0 21 24"><path d="M5.6 8.7 L10.5 4.1 L15.4 8.7 M5.6 14.8 L10.5 19.4 L15.4 14.8" fill="none" stroke="#3b3b3b" stroke-width="1.7" stroke-linecap="round" stroke-linejoin="round"/></svg>
<div class="t ev" style="left:84px;top:1040.95px">content-api-request-created</div>
<div class="av" style="left:466px;top:1038.15px">7</div>
<div class="t pe" style="left:499.5px;top:1040.95px">7448f418-f0e1-7097-81ce-5b07924947c5</div>
<div class="dash" style="left:1092px;top:1051px"></div>
<div class="t lib" style="left:1410px;top:1040.95px">posthog-node</div>
<div class="t tm" style="left:1656px;top:1040.95px">2 days ago</div>
<svg class="abs" style="left:1858.50px;top:1046.25px" width="23" height="8" viewBox="0 0 23 8"><circle cx="4" cy="4" r="1.85" fill="#2a2a2a"/><circle cx="11.7" cy="4" r="1.85" fill="#2a2a2a"/><circle cx="19.4" cy="4" r="1.85" fill="#2a2a2a"/></svg>
<div class="row" style="top:1070.85px;height:40.39px"></div>
<svg class="abs" style="left:42px;top:1078.04px" width="21" height="24" viewBox="0 0 21 24"><path d="M5.6 8.7 L10.5 4.1 L15.4 8.7 M5.6 14.8 L10.5 19.4 L15.4 14.8" fill="none" stroke="#3b3b3b" stroke-width="1.7" stroke-linecap="round" stroke-linejoin="round"/></svg>
<div class="t ev" style="left:84px;top:1081.34px">content-api-request-created</div>
<div class="av" style="left:466px;top:1078.54px">7</div>
<div class="t pe" style="left:499.5px;top:1081.34px">7448f418-f0e1-7097-81ce-5b07924947c5</div>
<div class="dash" style="left:1092px;top:1091px"></div>
<div class="t lib" style="left:1410px;top:1081.34px">posthog-node</div>
<div class="t tm" style="left:1656px;top:1081.34px">2 days ago</div>
<svg class="abs" style="left:1858.50px;top:1086.64px" width="23" height="8" viewBox="0 0 23 8"><circle cx="4" cy="4" r="1.85" fill="#2a2a2a"/><circle cx="11.7" cy="4" r="1.85" fill="#2a2a2a"/><circle cx="19.4" cy="4" r="1.85" fill="#2a2a2a"/></svg>
<div class="row" style="top:1111.24px;height:40.39px"></div>
<svg class="abs" style="left:42px;top:1118.43px" width="21" height="24" viewBox="0 0 21 24"><path d="M5.6 8.7 L10.5 4.1 L15.4 8.7 M5.6 14.8 L10.5 19.4 L15.4 14.8" fill="none" stroke="#3b3b3b" stroke-width="1.7" stroke-linecap="round" stroke-linejoin="round"/></svg>
<div class="t ev" style="left:84px;top:1121.73px">project-created</div>
<div class="av" style="left:466px;top:1118.93px">7</div>
<div class="t pe" style="left:499.5px;top:1121.73px">7448f418-f0e1-7097-81ce-5b07924947c5</div>
<div class="dash" style="left:1092px;top:1132px"></div>
<div class="t lib" style="left:1410px;top:1121.73px">posthog-go</div>
<div class="t tm" style="left:1656px;top:1121.73px">2 days ago</div>
<svg class="abs" style="left:1858.50px;top:1127.03px" width="23" height="8" viewBox="0 0 23 8"><circle cx="4" cy="4" r="1.85" fill="#2a2a2a"/><circle cx="11.7" cy="4" r="1.85" fill="#2a2a2a"/><circle cx="19.4" cy="4" r="1.85" fill="#2a2a2a"/></svg>
<div class="row" style="top:1151.63px;height:40.39px"></div>
<svg class="abs" style="left:42px;top:1158.83px" width="21" height="24" viewBox="0 0 21 24"><path d="M5.6 8.7 L10.5 4.1 L15.4 8.7 M5.6 14.8 L10.5 19.4 L15.4 14.8" fill="none" stroke="#3b3b3b" stroke-width="1.7" stroke-linecap="round" stroke-linejoin="round"/></svg>
<div class="t ev" style="left:84px;top:1162.12px">account-created</div>
<div class="av" style="left:466px;top:1159.33px">7</div>
<div class="t pe" style="left:499.5px;top:1162.12px">7448f418-f0e1-7097-81ce-5b07924947c5</div>
<div class="dash" style="left:1092px;top:1172px"></div>
<div class="t lib" style="left:1410px;top:1162.12px">posthog-go</div>
<div class="t tm" style="left:1656px;top:1162.12px">2 days ago</div>
<svg class="abs" style="left:1858.50px;top:1167.42px" width="23" height="8" viewBox="0 0 23 8"><circle cx="4" cy="4" r="1.85" fill="#2a2a2a"/><circle cx="11.7" cy="4" r="1.85" fill="#2a2a2a"/><circle cx="19.4" cy="4" r="1.85" fill="#2a2a2a"/></svg>
<div class="sep" style="top:1191.2px"></div><div class="sept" style="top:1198.7px">October 24, 2025</div>
</div></body></html>
